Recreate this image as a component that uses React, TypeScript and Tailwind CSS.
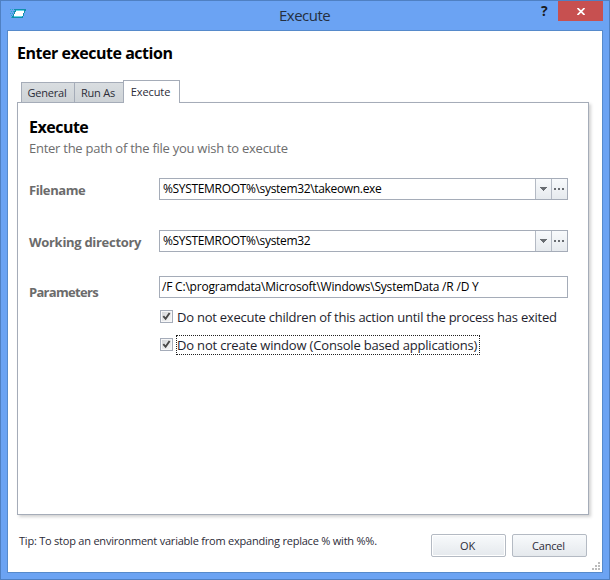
import React, { useState } from 'react';

const TABS = ['General', 'Run As', 'Execute'];

const AppIcon = () => (
  <svg width="16" height="10" viewBox="0 0 16 10" shapeRendering="crispEdges">
    <path d="M4 0h12v2h-1v2h-1v3h-1v2H2V7h1V5h1V2h1V1H4z" fill="#0f8fac" />
    <path d="M6 1h8v1H6zM4 7h8v1H4z" fill="#62d5e4" />
    <path d="M6 2h8v2h-1v3H4V5h1V3h1z" fill="#fff" />
    <path d="M0 0h1v1H0zM2 0h1v1H2zM1 2h1v1H1zM3 2h1v1H3zM0 4h1v1H0zM2 4h1v1H2zM1 6h1v1H1zM1 8h1v1H1z" fill="#22aecb" />
  </svg>
);

const CheckBox = ({ checked, onChange }: { checked: boolean; onChange: () => void }) => (
  <button onClick={onChange} className="size-[13px] shrink-0 border border-[#a5acb9] bg-[#f7f7f8] p-px">
    <span className="block size-[9px] bg-linear-to-br from-[#d5d7da] to-[#f6f6f6]">
      {checked && (
        <svg width="9" height="9" viewBox="0 0 9 9" className="block">
          <path d="M1.3 4.2L3.6 6.8L7.6 1" fill="none" stroke="#484848" strokeWidth="1.9" />
        </svg>
      )}
    </span>
  </button>
);

const PathInput = ({ value }: { value: string }) => (
  <div className="flex h-[22px] w-[409px] border border-[#a5acb8] bg-white">
    <div className="flex-1 pl-[3px] text-[12px] leading-[19px] tracking-[-0.33px] whitespace-pre text-black">{value}</div>
    <div className="flex w-4 justify-center border-l border-[#b4bac4] bg-linear-to-b from-[#f8fafc] to-[#e6eaee] pt-2">
      <svg width="7" height="4" viewBox="0 0 7 4" shapeRendering="crispEdges">
        <path d="M0 0h7v1H6v1H5v1H4v1H3V3H2V2H1V1H0z" fill="#696d72" />
      </svg>
    </div>
    <div className="flex w-4 border-l border-[#b4bac4] bg-linear-to-b from-[#f8fafc] to-[#e6eaee] pt-[9px] pl-0.5">
      <svg width="10" height="2" viewBox="0 0 10 2" shapeRendering="crispEdges">
        <path d="M0 0h2v2H0zM4 0h2v2H4zM8 0h2v2H8z" fill="#696d72" />
      </svg>
    </div>
  </div>
);

const App: React.FC = () => {
  const [waitForExit, setWaitForExit] = useState(true);
  const [noWindow, setNoWindow] = useState(true);

  return (
    <div className="flex h-[580px] w-[610px] flex-col border border-[#4f80c2] bg-[#6ba3f3] px-1.5 font-['Open_Sans',sans-serif] text-[#1e1e2d]">
      {/* Title bar */}
      <div className="flex h-[29px] shrink-0">
        <div className="w-[180px] pt-2 pl-[3px]">
          <AppIcon />
        </div>
        <div className="flex-1 pl-[92px] text-[15px] leading-[29px] tracking-[-0.5px] text-[#252f40]">Execute</div>
        <div className="w-[17px] text-[14px] leading-[20px] font-bold text-[#1b1b1b]">?</div>
        <button className="flex h-5 w-[45px] items-center justify-center bg-[#c75050]">
          <svg width="8" height="7" viewBox="0 0 8 7">
            <path d="M0.5 0L7.5 7M7.5 0L0.5 7" stroke="#fff" strokeWidth="1.7" />
          </svg>
        </button>
      </div>

      <div className="relative h-[543px] w-[596px] border border-[#568acb] bg-white pl-[9px]">
        <h1 className="h-[49px] pt-[11px] text-[16px] leading-[22px] font-bold tracking-[-0.47px] text-black">
          Enter execute action
        </h1>

        {/* Tabs */}
        <div className="relative z-10 -mb-px flex h-[23px] items-end pl-1 text-[11px] tracking-[-0.2px] text-[#2c2c38]">
          <div className="h-[21px] w-[54px] border border-[#a5acb8] bg-linear-to-b from-[#d9dde0] to-[#ced3d7] pr-0.5 text-center leading-[20px]">{TABS[0]}</div>
          <div className="-ml-px h-[21px] w-[50px] border border-[#a5acb8] bg-linear-to-b from-[#d9dde0] to-[#ced3d7] pr-0.5 text-center leading-[20px]">{TABS[1]}</div>
          <div className="-ml-px h-[23px] w-[57px] border border-b-0 border-[#a5acb8] bg-white pr-0.5 text-center leading-[22px] tracking-[-0.1px]">{TABS[2]}</div>
        </div>

        <div className="h-[413px] w-[572px] border border-[#a5acb8] bg-white pl-[11px] shadow-[2px_2px_3px_rgba(0,0,0,0.18)]">
          <h2 className="pt-[13px] text-[16px] leading-[22px] font-bold tracking-[-0.5px] text-black">Execute</h2>
          <p className="h-[40px] text-[13px] leading-[20px] tracking-[-0.26px] text-[#6d6d6d]">
            Enter the path of the file you wish to execute
          </p>

          <div className="flex h-[52px]">
            <label className="w-[130px] text-[13px] leading-[24px] font-bold tracking-[-0.4px] text-[#6b6b6b]">Filename</label>
            <PathInput value="%SYSTEMROOT%\system32\takeown.exe" />
          </div>
          <div className="flex h-[46px]">
            <label className="w-[130px] text-[13px] leading-[24px] font-bold tracking-[-0.3px] text-[#6b6b6b]">Working directory</label>
            <PathInput value="%SYSTEMROOT%\system32" />
          </div>
          <div className="flex h-[34px]">
            <label className="w-[130px] pt-1 text-[13px] leading-[24px] font-bold tracking-[-0.7px] text-[#6b6b6b]">Parameters</label>
            <div className="h-[22px] w-[409px] border border-[#a5acb8] pl-[2px] text-[12px] leading-[19px] tracking-[-0.2px] whitespace-pre text-black">
              /F C:\programdata\Microsoft\Windows\SystemData /R /D Y
            </div>
          </div>

          <div className="ml-[131px] flex h-[28px]">
            <CheckBox checked={waitForExit} onChange={() => setWaitForExit(!waitForExit)} />
            <span className="-mt-[3px] ml-[4px] text-[13px] leading-[20px] tracking-[-0.24px] whitespace-nowrap">
              Do not execute children of this action until the process has exited
            </span>
          </div>
          <div className="ml-[131px] flex">
            <CheckBox checked={noWindow} onChange={() => setNoWindow(!noWindow)} />
            <span className="-mt-[3px] ml-[3px] h-5 w-[304px] border border-dotted border-[#202020] text-[13px] leading-[18px] tracking-[-0.18px] whitespace-nowrap">
              Do not create window (Console based applications)
            </span>
          </div>
        </div>

        {/* Footer */}
        <div className="flex pl-[2px] pt-[19px] text-[11px] text-[#2c2c38]">
          <div className="w-[412px] leading-[14px] tracking-[-0.22px] whitespace-nowrap">
            Tip: To stop an environment variable from expanding replace % with %%.
          </div>
          <button className="h-[23px] w-[75px] rounded-[2px] border border-[#b4bac3] bg-linear-to-b from-[#f8fafc] to-[#e5e9ed] pr-0.5 leading-[21px] tracking-[-0.2px] shadow-[inset_0_0_0_1px_#fff]">
            OK
          </button>
          <button className="ml-1.5 h-[23px] w-[75px] rounded-[2px] border border-[#b4bac3] bg-linear-to-b from-[#f8fafc] to-[#e5e9ed] pr-0.5 leading-[21px] tracking-[-0.2px]">
            Cancel
          </button>
        </div>

        <svg width="8" height="8" viewBox="0 0 8 8" shapeRendering="crispEdges" className="absolute right-0.5 bottom-0.5">
          <path d="M6 0h2v2H6zM3 3h2v2H3zM6 3h2v2H6zM0 6h2v2H0zM3 6h2v2H3zM6 6h2v2H6z" fill="#bcbcbc" />
        </svg>
      </div>
    </div>
  );
};

export default App;
